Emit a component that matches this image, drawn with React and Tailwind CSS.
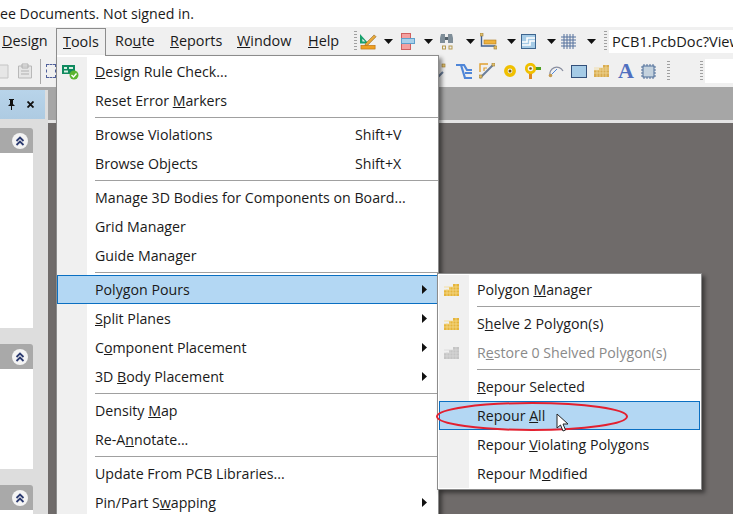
import React from "react";

const font = { fontFamily: '"Open Sans", "Noto Sans", sans-serif' };

// dropdown arrow used in the toolbar
const Caret = ({ className = "" }) => (
  <svg width="9" height="5" viewBox="0 0 9 5" className={className}>
    <path d="M0 0h9L4.500 5z" fill="#111" />
  </svg>
);

const Grip = ({ className = "" }) => (
  <div className={`w-[3px] h-[20px] bg-[repeating-linear-gradient(to_bottom,#a0a0a0_0,#a0a0a0_1px,transparent_1px,transparent_3px)] ${className}`} />
);

const PolygonIcon = ({ grey }) => {
  const c = grey ? "#c4c4c4" : "#e5b53c";
  const d = grey ? "#d8d8d8" : "#f5d98a";
  return (
    <svg width="15" height="12" viewBox="0 0 15 12">
      <path d="M0 6h5V3h4V0h6v12H0z" fill={c} />
      <path d="M0 9h15M0 6h15M0 3h15M3 5v7M6 3v9M9 3v9M12 0v12" stroke={d} strokeWidth="0.800" />
    </svg>
  );
};

const mainMenu = [
  { label: <><u>D</u>esign Rule Check...</>, icon: "drc" },
  { label: <>Reset Error <u>M</u>arkers</> },
  "sep",
  { label: <>Browse Violations</>, key: "Shift+V" },
  { label: <>Browse Objects</>, key: "Shift+X" },
  "sep",
  { label: <>Manage 3D Bodies for Components on Board...</> },
  { label: <>Grid Manager</> },
  { label: <>Guide Manager</> },
  "sep",
  { label: <>Poly<u>g</u>on Pours</>, arrow: true, active: true },
  { label: <><u>S</u>plit Planes</>, arrow: true },
  { label: <>C<u>o</u>mponent Placement</>, arrow: true },
  { label: <>3D <u>B</u>ody Placement</>, arrow: true },
  "sep",
  { label: <>Density <u>M</u>ap</> },
  { label: <>Re-A<u>n</u>notate...</> },
  "sep",
  { label: <>Update From PCB Libraries...</> },
  { label: <>Pin/Part S<u>w</u>apping</>, arrow: true },
];

const subMenu = [
  { label: <>Polygon <u>M</u>anager</>, icon: "poly" },
  "sep",
  { label: <>S<u>h</u>elve 2 Polygon(s)</>, icon: "poly" },
  { label: <>R<u>e</u>store 0 Shelved Polygon(s)</>, icon: "polygrey", disabled: true },
  "sep",
  { label: <><u>R</u>epour Selected</> },
  { label: <>Repour <u>A</u>ll</>, active: true },
  { label: <>Repour <u>V</u>iolating Polygons</> },
  { label: <>Repour M<u>o</u>dified</> },
];

const DrcIcon = () => (
  <svg width="17" height="16" viewBox="0 0 17 16">
    <rect x="0" y="1" width="13" height="9" fill="#0f8a5f" />
    <path d="M2 3h3v2H2zM7 3h4v2H7zM2 6.500h4v2H2z" fill="#d8f0e2" />
    <circle cx="12" cy="11" r="4.500" fill="#5cb531" />
    <path d="M9.500 11l2 2 3-3.500" stroke="#fff" strokeWidth="1.400" fill="none" />
  </svg>
);

const MenuRows = ({ items }) =>
  items.map((item, i) => {
    if (item === "sep") {
      return (
        <div key={i} className="h-[5px] flex items-center">
          <div className="w-[30px] h-full shrink-0 bg-[#f0f0f0]" />
          <div className="h-px flex-1 ml-[8px] bg-[#a0a0a0]" />
        </div>
      );
    }
    return (
      <div
        key={i}
        className={`relative h-[29px] flex items-center text-[14.2px] ${
          item.active ? "bg-[#b3d7f3] outline outline-1 -outline-offset-1 outline-[#0a6fc2]" : ""
        } ${item.disabled ? "text-[#8a8a8a]" : "text-[#1a1a1a]"}`}
      >
        <div className={`w-[30px] self-stretch shrink-0 flex items-center pl-[5px] ${item.active ? "" : "bg-[#f0f0f0]"}`}>
          {item.icon === "drc" && <DrcIcon />}
          {item.icon === "poly" && <PolygonIcon />}
          {item.icon === "polygrey" && <PolygonIcon grey />}
        </div>
        <span className="ml-[8px] whitespace-nowrap">{item.label}</span>
        {item.key && <span className="absolute left-[298px] whitespace-nowrap">{item.key}</span>}
        {item.arrow && (
          <svg width="5" height="9" viewBox="0 0 5 9" className="absolute right-[11px]">
            <path d="M0 0l5 4.500L0 9z" fill="#111" />
          </svg>
        )}
      </div>
    );
  });

const SectionHeader = () => (
  <div className="h-[25px] w-[33px] bg-[#a9a9a9] rounded-tr-[3px] flex items-center justify-end pr-[5px]">
    <div className="w-[16px] h-[16px] rounded-full bg-[#f4f4f4] flex items-center justify-center">
      <svg width="10" height="10" viewBox="0 0 10 10">
        <path d="M1.500 5L5 1.500 8.500 5M1.500 9L5 5.500 8.500 9" stroke="#2b3a70" strokeWidth="1.800" fill="none" />
      </svg>
    </div>
  </div>
);

const App = () => {
  return (
    <div className="relative w-[733px] h-[514px] overflow-hidden flex flex-col bg-white text-[#1a1a1a]" style={font}>
      {/* title line */}
      <div className="h-[27px] bg-white text-[14.2px] leading-[27px] whitespace-nowrap overflow-hidden">
        ee Documents. Not signed in.
      </div>

      {/* menu bar and first toolbar */}
      <div className="h-[28px] bg-[#f0f0f0] flex items-center text-[14.4px] whitespace-nowrap">
        <span className="ml-[2px] w-[54px]"><u>D</u>esign</span>
        <span className="w-[50px] h-[27px] self-end border border-b-0 border-[#8c8c8c] pl-[6px] leading-[25px]"><u>T</u>ools</span>
        <span className="ml-[9px] w-[55px]">Ro<u>u</u>te</span>
        <span className="w-[67px]"><u>R</u>eports</span>
        <span className="w-[71px]"><u>W</u>indow</span>
        <span className="w-[46px]"><u>H</u>elp</span>
        <Grip />
        {/* pencil and ruler */}
        <svg width="17" height="17" viewBox="0 0 18 18" className="ml-[3px]">
          <path d="M0 1l9 10H0zM2.500 6v3h3z" fill="#18a06c" fillRule="evenodd" />
          <path d="M6 11L15 2l2 2-9 9-3 1z" fill="#e8a93a" stroke="#8a5a10" strokeWidth="0.600" />
          <rect x="1" y="13" width="15" height="4" fill="#f0a020" stroke="#b06a10" strokeWidth="0.600" />
        </svg>
        <Caret className="ml-[7px]" />
        <svg width="14" height="17" viewBox="0 0 14 17" className="ml-[8px]">
          <rect x="0.500" y="0.500" width="9" height="16" fill="#f4a0a0" stroke="#d06060" />
          <rect x="0.500" y="5.500" width="13" height="5" fill="#a8d0ea" stroke="#5f9fcb" />
        </svg>
        <Caret className="ml-[9px]" />
        <svg width="13" height="18" viewBox="0 0 13 18" className="ml-[7px]">
          <path d="M1 2h4v9H0V6zM8 2h4l1 4v5H8z" fill="#7f8e99" />
          <path d="M5 5h3v3H5z" fill="#53616b" />
          <rect x="2.500" y="14" width="3" height="3" fill="none" stroke="#b59a50" />
          <rect x="9" y="14" width="3" height="3" fill="none" stroke="#b59a50" />
        </svg>
        <Caret className="ml-[13px]" />
        <svg width="17" height="17" viewBox="0 0 17 17" className="ml-[5px]">
          <path d="M1.500 3v10h14" fill="none" stroke="#3f5f8f" strokeWidth="1.400" />
          <rect x="4" y="7" width="12" height="4" fill="#eeb23e" stroke="#b07a20" strokeWidth="0.600" />
          <rect x="0" y="0" width="3" height="3" fill="#e0c070" stroke="#9a7a30" strokeWidth="0.600" />
          <rect x="14" y="13" width="3" height="3" fill="#e0c070" stroke="#9a7a30" strokeWidth="0.600" />
        </svg>
        <Caret className="ml-[10px]" />
        <svg width="15" height="15" viewBox="0 0 15 15" className="ml-[5px]">
          <rect x="0.500" y="0.500" width="14" height="14" fill="#a5cbe6" stroke="#3e658f" />
          <path d="M1 8h5V4h8M1 11h8V7h5" fill="none" stroke="#fff" strokeWidth="1.600" />
        </svg>
        <Caret className="ml-[11px]" />
        <svg width="15" height="15" viewBox="0 0 15 15" className="ml-[5px]">
          <path d="M3 0v15M6 0v15M9 0v15M12 0v15M0 3h15M0 6h15M0 9h15M0 12h15" stroke="#54709c" strokeWidth="1" />
        </svg>
        <Caret className="ml-[11px]" />
        <Grip className="ml-[8px]" />
        <div className="ml-[2px] flex-1 h-[23px] bg-white overflow-hidden text-[14.6px] leading-[23px] pl-[3px]">PCB1.PcbDoc?View</div>
      </div>

      {/* second toolbar */}
      <div className="h-[32px] bg-[#f0f0f0] flex items-center">
        <svg width="32" height="16" viewBox="0 0 32 16" className="shrink-0">
          <path d="M-4 2h12v13H-4z" fill="#e6e6e6" stroke="#c4c4c4" />
          <path d="M18.500 3h13v12h-13z" fill="#e6e6e6" stroke="#b8b8b8" />
          <path d="M22 1h6v4h-6zM21 8h8M21 11h8" fill="none" stroke="#b0b0b0" />
        </svg>
        <div className="ml-[8px] w-px h-[25px] bg-[#a8a8a8]" />
        <div className="ml-[5px] w-[10px] h-[14px] border border-dashed border-[#50609a]" />
        <svg width="17" height="16" viewBox="0 0 17 16" className="ml-[382px] shrink-0">
          <path d="M0 14L5 9" stroke="#6a7f9c" strokeWidth="2" />
          <rect x="4" y="1" width="3" height="3" fill="#e0c070" stroke="#9a7a30" strokeWidth="0.600" />
        </svg>
        <svg width="16" height="15" viewBox="0 0 16 15" className="ml-px">
          <path d="M0 1h8l3 5h5M5 1l4 13h7M9 9h7" fill="none" stroke="#4f86d8" strokeWidth="2.200" />
        </svg>
        <svg width="16" height="16" viewBox="0 0 16 16" className="ml-[7px]">
          <path d="M1 15L14 2" stroke="#6a7f9c" strokeWidth="2" />
          <path d="M1 9V1h8" fill="none" stroke="#e0a030" strokeWidth="1.400" />
          <path d="M5 8V5h3" fill="none" stroke="#e0a030" strokeWidth="1.200" />
          <rect x="0" y="12" width="3" height="3" fill="#e0c070" stroke="#9a7a30" strokeWidth="0.600" />
          <rect x="13" y="0" width="3" height="3" fill="#e0c070" stroke="#9a7a30" strokeWidth="0.600" />
        </svg>
        <svg width="12" height="12" viewBox="0 0 12 12" className="ml-[9px]">
          <circle cx="6" cy="6" r="4.200" fill="none" stroke="#f0c000" strokeWidth="3.500" />
          <circle cx="6" cy="6" r="1.500" fill="#7a5a10" />
        </svg>
        <svg width="16" height="16" viewBox="0 0 16 16" className="ml-[9px]">
          <rect x="4" y="10" width="3" height="6" fill="#e08a20" />
          <rect x="10" y="4" width="6" height="3" fill="#4fa020" />
          <circle cx="5.500" cy="5.500" r="4.200" fill="none" stroke="#f0c000" strokeWidth="2.800" />
          <circle cx="5.500" cy="5.500" r="1.300" fill="#7a5a10" />
        </svg>
        <svg width="16" height="14" viewBox="0 0 16 14" className="ml-[7px]">
          <path d="M2 12A7 7 0 0 1 15 7" fill="none" stroke="#8a8fa0" strokeWidth="1.200" />
          <path d="M3 11L9 5" stroke="#4f86d8" strokeWidth="1" />
          <circle cx="2.500" cy="11.500" r="1.800" fill="#c49a50" />
        </svg>
        <svg width="16" height="13" viewBox="0 0 16 13" className="ml-[7px]">
          <rect x="0.500" y="0.500" width="15" height="12" fill="#a5cbe6" stroke="#33507a" />
        </svg>
        <svg width="15" height="12" viewBox="0 0 15 12" className="ml-[7px]">
          <path d="M0 5h5V3h4V0h6v12H0z" fill="#d9ac50" />
          <path d="M0 8h15M0 5h15M0 3h15M3 5v7M6 3v9M9 3v9M12 0v12" stroke="#f0d89a" strokeWidth="0.800" />
        </svg>
        <span className="ml-[9px] w-[15px] text-[22px] font-bold leading-none text-[#4f6fbf]" style={{ fontFamily: '"Liberation Serif", serif' }}>A</span>
        <svg width="15" height="15" viewBox="0 0 15 15" className="ml-[8px]">
          <path d="M3 0v15M6 0v15M9 0v15M12 0v15M0 3h15M0 6h15M0 9h15M0 12h15" stroke="#4f6f99" strokeWidth="1" />
          <rect x="2" y="2" width="11" height="11" fill="#c4d2de" stroke="#4f6f99" />
        </svg>
        <Grip className="ml-[11px]" />
        <Grip className="ml-[30px]" />
        <div className="ml-[2px] flex-1 h-[24px] bg-white" />
      </div>

      {/* panel and workspace */}
      <div className="flex-1 flex min-h-0">
        <div className="w-[48px] shrink-0 flex flex-col bg-[#dddddd]">
          <div className="h-[3px] bg-[#a6a6a6]" />
          <div className="h-[29px] w-[45px] bg-[linear-gradient(to_bottom,#b8d4ea,#aecbe2)] flex items-center justify-end gap-[12px] pr-[11px]">
            <svg width="7" height="11" viewBox="0 0 7 11">
              <path d="M1 0h5v1H5v4l2 2H4v4H3V7H0l2-2V1H1z" fill="#111" />
            </svg>
            <svg width="7" height="7" viewBox="0 0 7 7">
              <path d="M0.500 0.500l6 6M6.500 0.500l-6 6" stroke="#111" strokeWidth="1.800" />
            </svg>
          </div>
          <div className="h-[9px]" />
          <SectionHeader />
          <div className="h-[175px] w-[33px] bg-white" />
          <div className="h-[16px]" />
          <SectionHeader />
          <div className="h-[100px] w-[33px] bg-white" />
          <div className="h-[16px]" />
          <SectionHeader />
          <div className="flex-1 w-[33px] bg-white" />
        </div>
        <div className="flex-1 flex flex-col">
          <div className="h-[33px] bg-[#a6a6a6]" />
          <div className="h-[3px] bg-[#e4e4e4]" />
          <div className="flex-1 bg-[#6f6b6a]" />
        </div>
      </div>

      {/* Tools menu */}
      <div className="absolute left-[56px] top-[55px] w-[383px] h-[480px] bg-white border border-[#8c8c8c] border-t-0 pt-[2px] shadow-[3px_3px_4px_rgba(0,0,0,0.45)]">
        <MenuRows items={mainMenu} />
      </div>
      {/* line above the open menu, right of the Tools button */}
      <div className="absolute left-[105px] top-[55px] w-[334px] h-px bg-[#8c8c8c]" />

      {/* Polygon Pours submenu */}
      <div className="absolute left-[437px] top-[273px] w-[265px] h-[217px] bg-white border border-[#8c8c8c] p-px shadow-[3px_3px_4px_rgba(0,0,0,0.45)]">
        <MenuRows items={subMenu} />
      </div>

      {/* red ellipse drawn over the screenshot */}
      <svg width="200" height="34" viewBox="0 0 200 34" className="absolute left-[434px] top-[400px]">
        <ellipse cx="98" cy="16.500" rx="95" ry="13.500" fill="none" stroke="#e3202f" strokeWidth="2" />
      </svg>

      {/* mouse pointer */}
      <svg width="14" height="20" viewBox="0 0 14 20" className="absolute left-[556px] top-[413px]">
        <path d="M1 1v14l3.500-3 2.500 6 2.500-1-2.500-6h5z" fill="#fff" stroke="#222" strokeWidth="1" />
      </svg>
    </div>
  );
};

export default App;
